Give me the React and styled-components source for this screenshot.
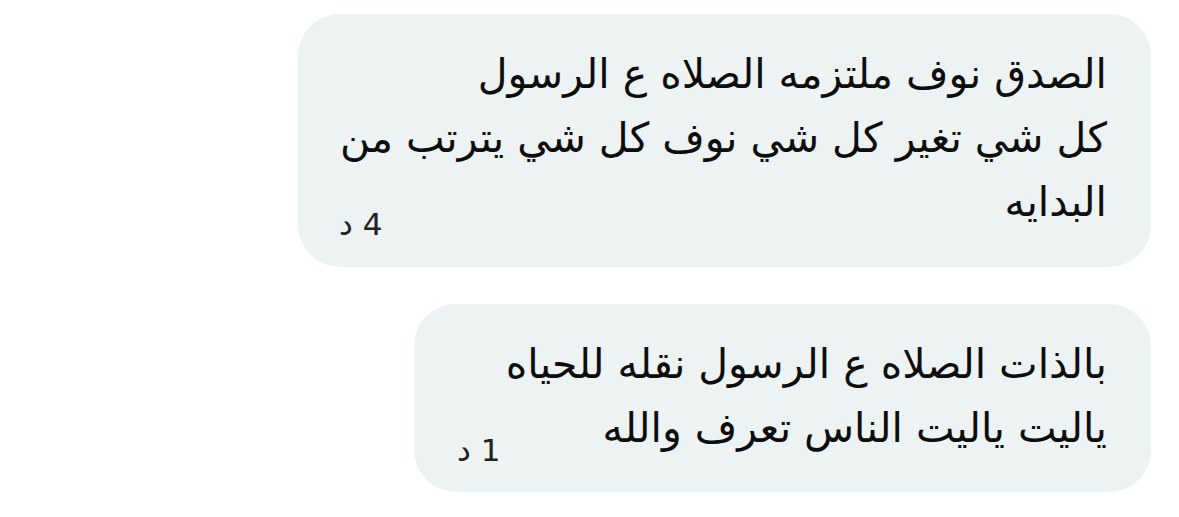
import React from "react";
import styled, { createGlobalStyle } from "styled-components";

const GlobalStyle = createGlobalStyle`
  html, body {
    margin: 0;
    padding: 0;
    background: #ffffff;
  }
  body {
    font-family: "DejaVu Sans", "Noto Sans", sans-serif;
    color: #0d0d0d;
  }
`;

const Thread = styled.div`
  display: flex;
  flex-direction: column;
  align-items: flex-end;
  gap: 37px;
  padding: 14px 28px 0 0;
`;

const Bubble = styled.div`
  display: grid;
  grid-template-columns: minmax(0, 1fr);
  box-sizing: border-box;
  width: ${(p) => p.$width}px;
  background: #edf2f3;
  border-radius: 42px;
  padding: ${(p) => p.$pad};
`;

const Text = styled.div`
  grid-area: 1 / 1;
  justify-self: end;
  direction: rtl;
  font-size: 41px;
  line-height: 64px;
  white-space: nowrap;
`;

const Line = styled.div``;

const Stamp = styled.span`
  grid-area: 1 / 1;
  align-self: end;
  justify-self: start;
  direction: rtl;
  font-size: 31px;
  line-height: 32px;
  color: #222222;
  margin-left: -13px;
  margin-bottom: -6px;
`;

const messages = [
  {
    id: 1,
    lines: [
      "الصدق نوف ملتزمه الصلاه ع الرسول",
      "كل شي تغير كل شي نوف كل شي يترتب من",
      "البدايه",
    ],
    time: "4 د",
    width: 853,
    pad: "28px 44px 33px 54px",
  },
  {
    id: 2,
    lines: ["بالذات الصلاه ع الرسول نقله للحياه", "ياليت ياليت الناس تعرف والله"],
    time: "1 د",
    width: 737,
    pad: "28px 44px 32px 56px",
  },
];

export default function App() {
  return (
    <>
      <GlobalStyle />
      <Thread>
        {messages.map((m) => (
          <Bubble key={m.id} $width={m.width} $pad={m.pad}>
            <Text>
              {m.lines.map((l, i) => (
                <Line key={i}>{l}</Line>
              ))}
            </Text>
            <Stamp>{m.time}</Stamp>
          </Bubble>
        ))}
      </Thread>
    </>
  );
}
